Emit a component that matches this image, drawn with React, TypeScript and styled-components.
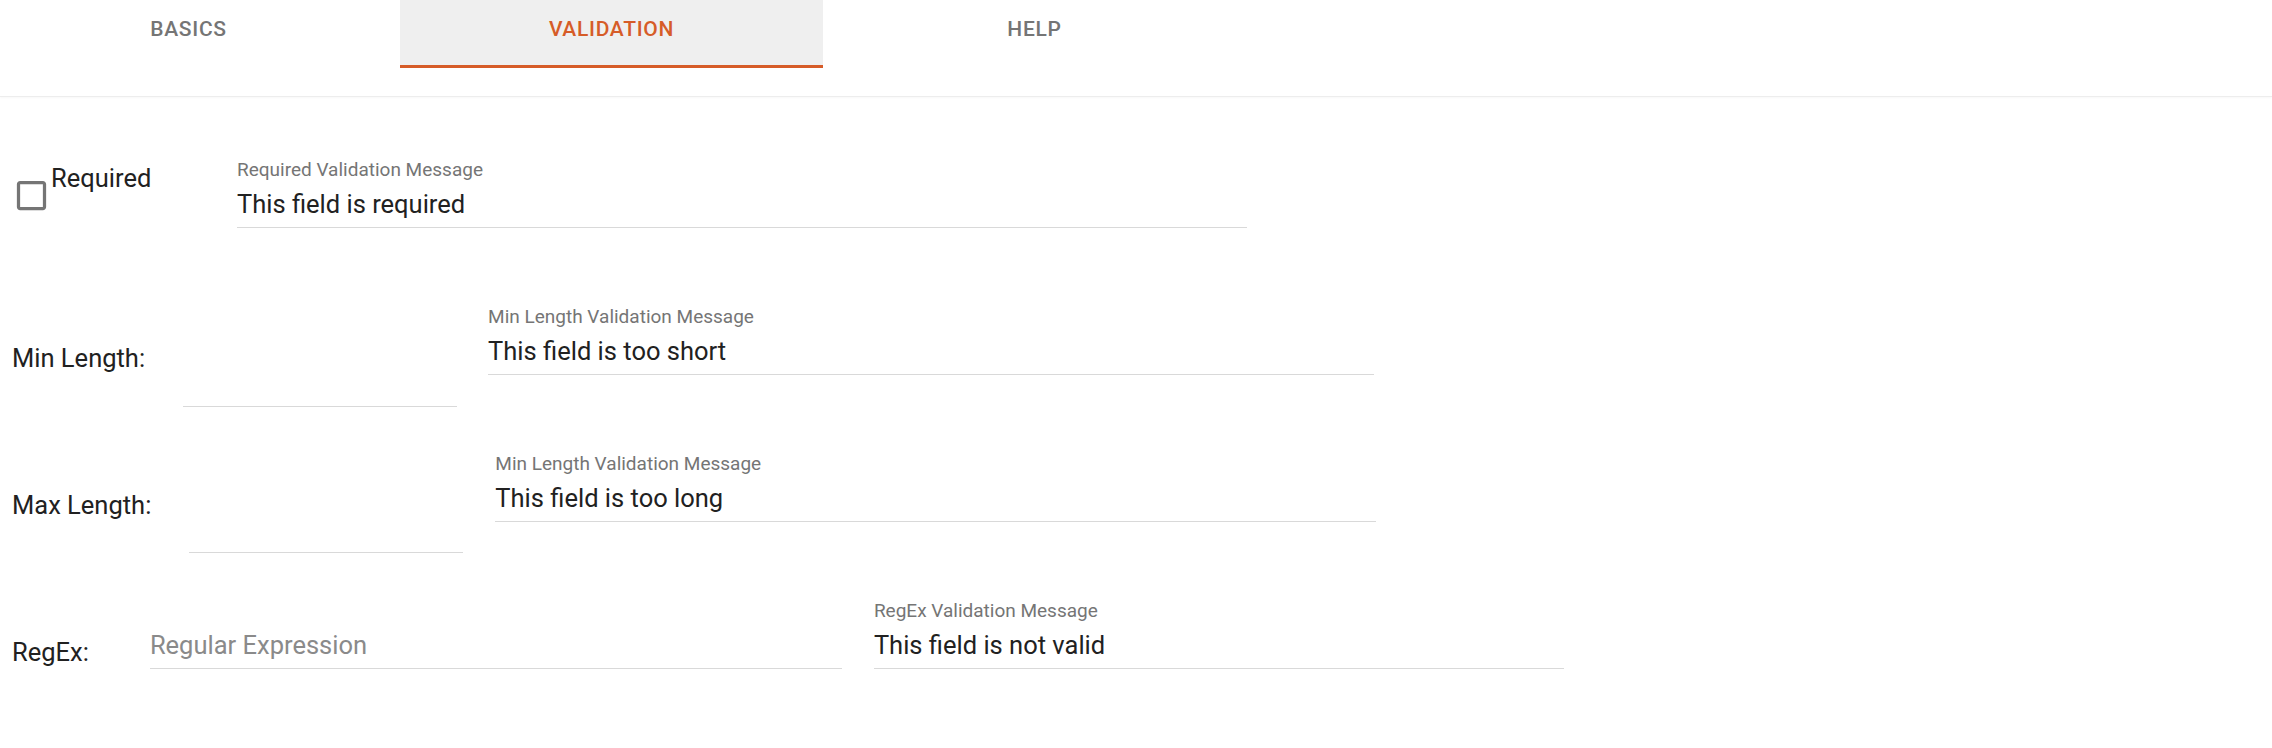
import React from 'react'
import styled, { createGlobalStyle } from 'styled-components'

const GlobalStyle = createGlobalStyle`
  body {
    margin: 0;
    background: #fff;
    font-family: Roboto, "Liberation Sans", Arial, sans-serif;
  }
`

const tabs = [
  { label: 'Basics' },
  { label: 'Validation', active: true },
  { label: 'Help' },
]

const App = () => {
  return (
    <Page>
      <GlobalStyle />
      <TabBar>
        <TabStrip>
          {tabs.map(t => (
            <Tab key={t.label} $active={t.active}>
              {t.label}
            </Tab>
          ))}
        </TabStrip>
      </TabBar>

      <Form>
        <Row>
          <CheckGroup>
            <CheckIcon viewBox="0 0 24 24">
              <path d="M19 5v14H5V5h14m0-2H5c-1.11 0-2 .9-2 2v14c0 1.1.89 2 2 2h14c1.1 0 2-.9 2-2V5c0-1.1-.9-2-2-2z" />
            </CheckIcon>
            <CheckText>Required</CheckText>
          </CheckGroup>
          <Field $w={1010}>
            <FieldLabel>Required Validation Message</FieldLabel>
            <Input defaultValue="This field is required" />
          </Field>
        </Row>

        <Row>
          <RowLabel $mt={37} $mr={38}>Min Length:</RowLabel>
          <SideInput $w={274} $mt={62} $mr={31} />
          <Field $w={886}>
            <FieldLabel>Min Length Validation Message</FieldLabel>
            <Input defaultValue="This field is too short" />
          </Field>
        </Row>

        <Row>
          <RowLabel $mt={37} $mr={38}>Max Length:</RowLabel>
          <SideInput $w={274} $mt={61} $mr={32} />
          <Field $w={881}>
            <FieldLabel>Min Length Validation Message</FieldLabel>
            <Input defaultValue="This field is too long" />
          </Field>
        </Row>

        <Row>
          <RowLabel $mt={37} $mr={61}>RegEx:</RowLabel>
          <SideInput $w={692} $mt={30} $mr={32} placeholder="Regular Expression" />
          <Field $w={690}>
            <FieldLabel>RegEx Validation Message</FieldLabel>
            <Input defaultValue="This field is not valid" />
          </Field>
        </Row>
      </Form>
    </Page>
  )
}

const Page = styled.div`
  width: 100%;
  min-height: 748px;
  background: #fff;
  overflow: hidden;
`

const TabBar = styled.div`
  height: 96px;
  border-bottom: 1px solid #ededed;
  box-shadow: 0 1px 2px rgba(0, 0, 0, 0.03);
`

const TabStrip = styled.div`
  display: flex;
  height: 68px;
  margin-left: -23px;
`

const Tab = styled.button<{ $active?: boolean }>`
  display: flex;
  justify-content: center;
  align-items: flex-start;
  width: 423px;
  flex: none;
  height: 68px;
  box-sizing: border-box;
  margin: 0;
  padding: 17px 0 0;
  border: none;
  border-bottom: 3px solid ${p => (p.$active ? '#d65c28' : 'transparent')};
  background: ${p => (p.$active ? '#efefef' : 'transparent')};
  color: ${p => (p.$active ? '#d65c28' : '#757575')};
  font-family: Roboto, "Liberation Sans", Arial, sans-serif;
  font-weight: 500;
  font-size: 21px;
  line-height: 24px;
  letter-spacing: 0.7px;
  text-transform: uppercase;
  cursor: pointer;
`

const Form = styled.div`
  padding-top: 62px;
`

const Row = styled.div`
  display: flex;
  align-items: flex-start;
  height: 147px;
  padding-left: 12px;
`

const CheckGroup = styled.div`
  display: flex;
  align-items: flex-start;
  width: 225px;
  flex: none;
`

const CheckIcon = styled.svg`
  width: 39px;
  height: 39px;
  margin: 17px 0 0 0;
  fill: #757575;
  flex: none;
`

const CheckText = styled.span`
  margin-top: 4px;
  font-size: 25.5px;
  line-height: 30px;
  color: #212121;
`

const Field = styled.div<{ $w: number }>`
  width: ${p => p.$w}px;
  flex: none;
`

const FieldLabel = styled.label`
  display: block;
  margin-bottom: 8px;
  font-size: 19px;
  line-height: 22px;
  color: #757575;
`

const Input = styled.input`
  display: block;
  width: 100%;
  height: 39px;
  box-sizing: border-box;
  margin: 0;
  padding: 0 0 8px;
  border: none;
  border-bottom: 1px solid #d9d9d9;
  background: transparent;
  outline: none;
  font-family: Roboto, "Liberation Sans", Arial, sans-serif;
  font-size: 25.5px;
  line-height: 30px;
  color: #212121;

  &::placeholder {
    color: #8a8a8a;
  }
`

const RowLabel = styled.span<{ $mt: number; $mr: number }>`
  flex: none;
  margin: ${p => p.$mt}px ${p => p.$mr}px 0 0;
  font-size: 25.5px;
  line-height: 30px;
  color: #212121;
`

const SideInput = styled(Input)<{ $w: number; $mt: number; $mr: number }>`
  flex: none;
  width: ${p => p.$w}px;
  margin: ${p => p.$mt}px ${p => p.$mr}px 0 0;
`

export default App
